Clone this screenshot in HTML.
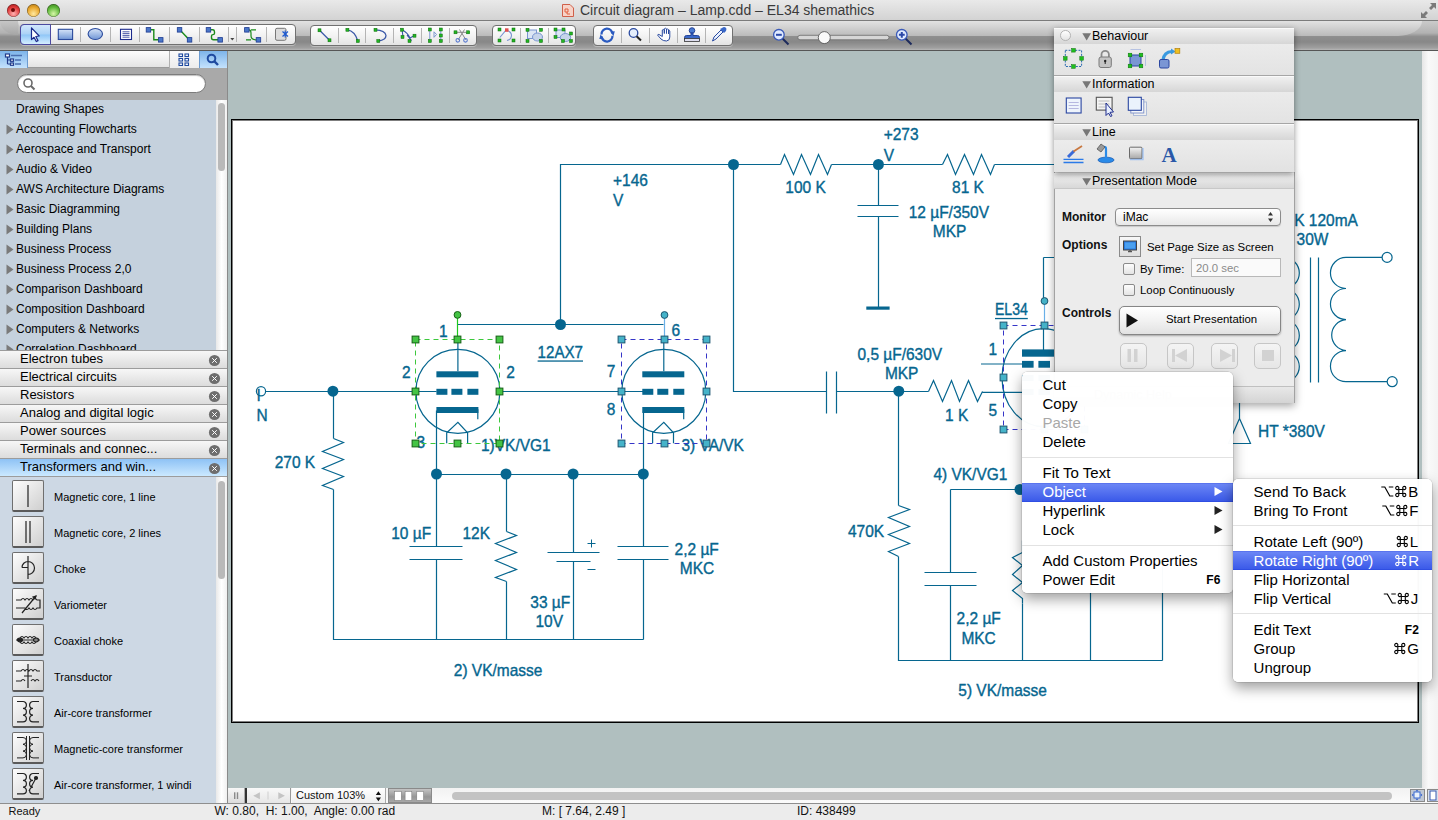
<!DOCTYPE html>
<html><head><meta charset="utf-8">
<style>
*{box-sizing:border-box}
html,body{margin:0;padding:0}
body{width:1438px;height:820px;overflow:hidden;position:relative;font-family:"Liberation Sans",sans-serif;background:#b0bfbf;color:#000}
.a{position:absolute}
#title{left:0;top:0;width:1438px;height:21px;background:linear-gradient(#ebebeb,#d2d2d2);border-bottom:1px solid #6f6f6f}
#tool{left:0;top:21px;width:1438px;height:30px;background:linear-gradient(#c6c6c6 0,#a2a2a2 45%,#8e8e8e 60%,#9a9a9a 85%,#b8b8b8 96%,#555 97%,#555 100%)}
#toolhl{left:18px;top:21px;width:1402px;height:14px;background:linear-gradient(#e2e2e2,#c9c9c9);border-radius:0 0 22px 22px/0 0 14px 14px}
#side{left:0;top:51px;width:228px;height:752px;background:#c7d2de;border-right:1px solid #8a8a8a}
#canvas{left:228px;top:51px;width:1194px;height:737px;background:#b0bfbf}
#vscroll{left:1422px;top:51px;width:16px;height:737px;background:linear-gradient(90deg,#e6e6e6,#f9f9f9 40%,#f3f3f3)}
#hscroll{left:228px;top:788px;width:1210px;height:15px;background:linear-gradient(#f0f0f0,#fafafa)}
#status{left:0;top:803px;width:1438px;height:17px;background:#ececec;border-top:1px solid #9a9a9a;font-size:12px}
#page{left:231px;top:119px;width:1188px;height:604px;background:#fff;border:1px solid #000;box-shadow:inset 0 0 0 1px rgba(0,0,0,.5)}
</style></head><body>
<div class="a" style="left:0;top:0;width:1438px;height:20px;background:linear-gradient(#e9e9e9,#d3d3d3)"></div>
<div class="a" style="left:0;top:20px;width:1438px;height:1px;background:#7b7b7b"></div>
<div class="a" style="left:6.5px;top:3.5px;width:13px;height:13px;border-radius:50%;background:radial-gradient(circle at 50% 75%,#ffb3b3 0,#e03a3a 55%,#8a1010 100%);box-shadow:0 0.5px 0.5px rgba(255,255,255,.7),inset 0 0 0 0.6px rgba(0,0,0,.45)"></div>
<div class="a" style="left:26.5px;top:3.5px;width:13px;height:13px;border-radius:50%;background:radial-gradient(circle at 50% 75%,#ffe9a0 0,#e8a52a 55%,#9a6510 100%);box-shadow:0 0.5px 0.5px rgba(255,255,255,.7),inset 0 0 0 0.6px rgba(0,0,0,.45)"></div>
<div class="a" style="left:46.5px;top:3.5px;width:13px;height:13px;border-radius:50%;background:radial-gradient(circle at 50% 75%,#d7f7a8 0,#5fb83a 55%,#2f6f12 100%);box-shadow:0 0.5px 0.5px rgba(255,255,255,.7),inset 0 0 0 0.6px rgba(0,0,0,.45)"></div>
<div class="a" style="left:11px;top:8px;width:4px;height:4px;border-radius:50%;background:#6d0a0a"></div>
<svg class="a" style="left:562px;top:4px" width="12" height="13"><path d="M0.5,0.5 H8 L11.5,4 V12.5 H0.5 Z" fill="#f7d3c8" stroke="#d0604a"/><path d="M3,5 H6 V8 H3 Z M5,8 V10 H8" fill="none" stroke="#e06040" stroke-width="1"/></svg>
<div class="a" style="left:580px;top:2px;font-size:14px;line-height:17px;color:#3a3a3a;white-space:nowrap">Circuit diagram – Lamp.cdd – EL34 shemathics</div>
<svg class="a" style="left:1420px;top:2px" width="17" height="17"><g fill="#7a7a7a"><path d="M16,1 H10 L12,3 L9,6 L11,8 L14,5 L16,7 Z"/><path d="M1,16 H7 L5,14 L8,11 L6,9 L3,12 L1,10 Z"/></g></svg>
<div class="a" style="left:0;top:21px;width:1438px;height:30px;background:linear-gradient(#cbcbcb 0,#b2b2b2 40%,#8e8e8e 52%,#888 70%,#a0a0a0 90%,#b4b4b4 96%,#565656 97%)"></div>
<div class="a" style="left:18px;top:21px;width:1404px;height:15px;background:linear-gradient(#e2e2e2,#bababa);border-radius:0 0 24px 24px/0 0 15px 15px"></div>
<div class="a" style="left:0;top:21px;width:18px;height:14px;background:linear-gradient(#c6c6c6,#a6a6a6);border-radius:0 0 0 18px/0 0 0 14px"></div>
<div class="a" style="left:20px;top:24px;width:276px;height:20.5px;border-radius:4px;background:linear-gradient(#ffffff,#f3f3f3 50%,#e4e4e4);border:1px solid #707070;box-shadow:0 1px 0 rgba(255,255,255,.35)"></div>
<div class="a" style="left:20px;top:24px;width:31px;height:20.5px;border-radius:4px 0 0 4px;background:linear-gradient(#d2e7fd,#abd2f6 48%,#8fc6f7 52%,#d5eeff);border:1px solid #4c4aa0"></div>
<div class="a" style="left:80px;top:27px;width:1px;height:15px;background:#b4b4b4"></div>
<div class="a" style="left:110px;top:27px;width:1px;height:15px;background:#b4b4b4"></div>
<div class="a" style="left:139px;top:27px;width:1px;height:15px;background:#b4b4b4"></div>
<div class="a" style="left:169px;top:27px;width:1px;height:15px;background:#b4b4b4"></div>
<div class="a" style="left:199px;top:27px;width:1px;height:15px;background:#b4b4b4"></div>
<div class="a" style="left:228px;top:27px;width:1px;height:15px;background:#b4b4b4"></div>
<div class="a" style="left:236px;top:27px;width:1px;height:15px;background:#b4b4b4"></div>
<div class="a" style="left:266px;top:27px;width:1px;height:15px;background:#b4b4b4"></div>
<div class="a" style="left:309.5px;top:25px;width:167.5px;height:20.5px;border-radius:4px;background:linear-gradient(#ffffff,#f3f3f3 50%,#e4e4e4);border:1px solid #707070;box-shadow:0 1px 0 rgba(255,255,255,.35)"></div>
<div class="a" style="left:338px;top:28px;width:1px;height:15px;background:#b4b4b4"></div>
<div class="a" style="left:365px;top:28px;width:1px;height:15px;background:#b4b4b4"></div>
<div class="a" style="left:393px;top:28px;width:1px;height:15px;background:#b4b4b4"></div>
<div class="a" style="left:421px;top:28px;width:1px;height:15px;background:#b4b4b4"></div>
<div class="a" style="left:449px;top:28px;width:1px;height:15px;background:#b4b4b4"></div>
<div class="a" style="left:492px;top:25px;width:84px;height:20.5px;border-radius:4px;background:linear-gradient(#ffffff,#f3f3f3 50%,#e4e4e4);border:1px solid #707070;box-shadow:0 1px 0 rgba(255,255,255,.35)"></div>
<div class="a" style="left:520px;top:28px;width:1px;height:15px;background:#b4b4b4"></div>
<div class="a" style="left:548px;top:28px;width:1px;height:15px;background:#b4b4b4"></div>
<div class="a" style="left:593px;top:25px;width:140px;height:20.5px;border-radius:4px;background:linear-gradient(#ffffff,#f3f3f3 50%,#e4e4e4);border:1px solid #707070;box-shadow:0 1px 0 rgba(255,255,255,.35)"></div>
<div class="a" style="left:621px;top:28px;width:1px;height:15px;background:#b4b4b4"></div>
<div class="a" style="left:649px;top:28px;width:1px;height:15px;background:#b4b4b4"></div>
<div class="a" style="left:677px;top:28px;width:1px;height:15px;background:#b4b4b4"></div>
<div class="a" style="left:705px;top:28px;width:1px;height:15px;background:#b4b4b4"></div>
<svg class="a" style="left:0;top:0" width="1438" height="51"><path d="M31.5,27.8 V39.6 L34,37.3 L36.3,41.5 L38,40.6 L35.8,36.5 L39.2,36 Z" fill="#fff" stroke="#1c2a8c" stroke-width="1.2" stroke-linejoin="round"/><defs><linearGradient id="bl" x1="0" y1="0" x2="0" y2="1"><stop offset="0" stop-color="#d6e4f8"/><stop offset="1" stop-color="#7096d6"/></linearGradient></defs><rect x="58.3" y="29.3" width="14.3" height="10.2" fill="url(#bl)" stroke="#2a4a9c" stroke-width="1.1"/><ellipse cx="95.3" cy="34" rx="7.2" ry="5.5" fill="url(#bl)" stroke="#2a4a9c" stroke-width="1.1"/><rect x="120.5" y="29.3" width="11" height="10.2" fill="#fff" stroke="#1c2a8c" stroke-width="1.1"/><path d="M122.5,31.8 H129.5 M122.5,33.6 H129.5 M122.5,35.4 H129.5 M122.5,37.2 H129.5" stroke="#3a4aa0" stroke-width="0.9"/><path d="M151,29.8 H153.8 V39.8 H158.5" fill="none" stroke="#1a8a1a" stroke-width="1.4"/><rect x="146.2" y="27.6" width="4.5" height="4.5" fill="#4a76c8" stroke="#1c3a90" stroke-width="0.8"/><rect x="158.5" y="37.6" width="4.5" height="4.5" fill="#4a76c8" stroke="#1c3a90" stroke-width="0.8"/><path d="M180,30 L189,39.5" fill="none" stroke="#1a8a1a" stroke-width="1.4"/><rect x="177.3" y="27.6" width="4.5" height="4.5" fill="#4a76c8" stroke="#1c3a90" stroke-width="0.8"/><rect x="187.3" y="37.6" width="4.5" height="4.5" fill="#4a76c8" stroke="#1c3a90" stroke-width="0.8"/><path d="M210.5,29.8 H213 Q214.5,30 214.5,32 V33.3 Q214.5,34.6 213,34.6 Q211.5,34.6 211.5,36 V37.8 Q211.5,39.8 213.5,39.8 H218" fill="none" stroke="#1a8a1a" stroke-width="1.4"/><rect x="206.2" y="27.6" width="4.5" height="4.5" fill="#4a76c8" stroke="#1c3a90" stroke-width="0.8"/><rect x="217.9" y="37.6" width="4.5" height="4.5" fill="#4a76c8" stroke="#1c3a90" stroke-width="0.8"/><path d="M230.3,38 H234.3 L232.3,40.6 Z" fill="#444"/><path d="M249,29.8 Q251,29.8 251,33 V36 Q251,39.8 256.5,39.8 M251,29.8 H256 M246,39.8 H251" fill="none" stroke="#1a8a1a" stroke-width="1.2"/><rect x="244.6" y="27.6" width="4.5" height="4.5" fill="#4a76c8" stroke="#1c3a90" stroke-width="0.8"/><rect x="256.2" y="37.6" width="4.5" height="4.5" fill="#4a76c8" stroke="#1c3a90" stroke-width="0.8"/><rect x="275.5" y="28.3" width="10.5" height="12" rx="1.5" fill="#dcdcdc" stroke="#6a6a6a" stroke-width="0.9"/><path d="M282.5,31.5 L288,36.5 M288,31.5 L282.5,36.5 M285.2,30.5 V37.5" stroke="#1e5ad0" stroke-width="1.2"/><path d="M319.5,30.3 L329.5,40.3" stroke="#3a58a8" stroke-width="1.3"/><rect x="318.0" y="28.8" width="3" height="3" fill="#22b422" stroke="#0a6a0a" stroke-width="0.5"/><rect x="328.0" y="38.8" width="3" height="3" fill="#22b422" stroke="#0a6a0a" stroke-width="0.5"/><path d="M347.4,29.8 Q355,31 357.8,41" fill="none" stroke="#3a58a8" stroke-width="1.3"/><rect x="345.9" y="28.3" width="3" height="3" fill="#22b422" stroke="#0a6a0a" stroke-width="0.5"/><rect x="356.3" y="39.5" width="3" height="3" fill="#22b422" stroke="#0a6a0a" stroke-width="0.5"/><path d="M375.5,29.8 Q385,30 386,35.5 Q386,40 378.3,41" fill="none" stroke="#3a58a8" stroke-width="1.3"/><rect x="374.0" y="28.3" width="3" height="3" fill="#22b422" stroke="#0a6a0a" stroke-width="0.5"/><rect x="376.8" y="39.5" width="3" height="3" fill="#22b422" stroke="#0a6a0a" stroke-width="0.5"/><path d="M402,29.7 L403,36.5 M402,29.7 Q408,33 410,38 L414.5,35.5 M407,35 Q410,38 411.3,41" fill="none" stroke="#3a58a8" stroke-width="1.1"/><rect x="400.5" y="28.2" width="3" height="3" fill="#22b422" stroke="#0a6a0a" stroke-width="0.5"/><rect x="401.0" y="35.5" width="3" height="3" fill="#22b422" stroke="#0a6a0a" stroke-width="0.5"/><rect x="408.0" y="39.5" width="3" height="3" fill="#22b422" stroke="#0a6a0a" stroke-width="0.5"/><rect x="413.0" y="34.2" width="3" height="3" fill="#22b422" stroke="#0a6a0a" stroke-width="0.5"/><path d="M429.8,30 V41 M440.8,30 V41 M434,31.8 L436.5,34.5 L434,37.3 Z" fill="none" stroke="#7a96d0" stroke-width="1"/><rect x="428.3" y="28.0" width="3" height="3" fill="#22b422" stroke="#0a6a0a" stroke-width="0.5"/><rect x="428.3" y="39.5" width="3" height="3" fill="#22b422" stroke="#0a6a0a" stroke-width="0.5"/><rect x="439.3" y="28.0" width="3" height="3" fill="#22b422" stroke="#0a6a0a" stroke-width="0.5"/><rect x="439.3" y="34.0" width="3" height="3" fill="#22b422" stroke="#0a6a0a" stroke-width="0.5"/><rect x="439.3" y="39.5" width="3" height="3" fill="#22b422" stroke="#0a6a0a" stroke-width="0.5"/><path d="M455.5,32.3 H468.2 M458,40 L464.5,29.5 M466,40 L459.5,29.5" fill="none" stroke="#8a8a8a" stroke-width="1"/><circle cx="457.8" cy="40.3" r="1.8" fill="none" stroke="#5a7ad0" stroke-width="1.1"/><circle cx="465.5" cy="40.3" r="1.8" fill="none" stroke="#5a7ad0" stroke-width="1.1"/><rect x="454.0" y="30.799999999999997" width="3" height="3" fill="#22b422" stroke="#0a6a0a" stroke-width="0.5"/><rect x="466.7" y="30.799999999999997" width="3" height="3" fill="#22b422" stroke="#0a6a0a" stroke-width="0.5"/><path d="M499.8,37.5 L505.8,30.3 Q511,31 511.5,35 Q511.5,39.5 507,40.5" fill="none" stroke="#7a96d0" stroke-width="1.1"/><rect x="498.0" y="28.0" width="3" height="3" fill="#22b422" stroke="#0a6a0a" stroke-width="0.5"/><rect x="498.0" y="39.0" width="3" height="3" fill="#22b422" stroke="#0a6a0a" stroke-width="0.5"/><rect x="512.0" y="28.0" width="3" height="3" fill="#22b422" stroke="#0a6a0a" stroke-width="0.5"/><rect x="512.0" y="39.0" width="3" height="3" fill="#22b422" stroke="#0a6a0a" stroke-width="0.5"/><rect x="505" y="28.3" width="3.5" height="3.5" fill="#e05050"/><rect x="527.5" y="30" width="9" height="8.5" fill="#dce6f4" stroke="#7a96d0" stroke-width="1"/><ellipse cx="537.5" cy="37" rx="5" ry="4" fill="#c6d4ea" stroke="#7a96d0" stroke-width="1"/><rect x="526.0" y="28.3" width="3" height="3" fill="#22b422" stroke="#0a6a0a" stroke-width="0.5"/><rect x="526.0" y="39.5" width="3" height="3" fill="#22b422" stroke="#0a6a0a" stroke-width="0.5"/><rect x="539.5" y="28.3" width="3" height="3" fill="#22b422" stroke="#0a6a0a" stroke-width="0.5"/><rect x="539.5" y="39.5" width="3" height="3" fill="#22b422" stroke="#0a6a0a" stroke-width="0.5"/><rect x="556" y="30" width="9" height="7.5" fill="#dce6f4" stroke="#7a96d0" stroke-width="1"/><ellipse cx="565.5" cy="37.5" rx="5.2" ry="4" fill="#c6d4ea" stroke="#7a96d0" stroke-width="1"/><rect x="554.0" y="28.0" width="3" height="3" fill="#22b422" stroke="#0a6a0a" stroke-width="0.5"/><rect x="562.0" y="28.0" width="3" height="3" fill="#22b422" stroke="#0a6a0a" stroke-width="0.5"/><rect x="554.0" y="35.5" width="3" height="3" fill="#22b422" stroke="#0a6a0a" stroke-width="0.5"/><rect x="569.5" y="32.0" width="3" height="3" fill="#22b422" stroke="#0a6a0a" stroke-width="0.5"/><rect x="569.5" y="39.5" width="3" height="3" fill="#22b422" stroke="#0a6a0a" stroke-width="0.5"/><rect x="561.5" y="39.5" width="3" height="3" fill="#22b422" stroke="#0a6a0a" stroke-width="0.5"/><path d="M601.5,34.5 A5.5,5.5 0 0 1 612.5,33.8 M612.5,35.8 A5.5,5.5 0 0 1 601.5,36.3" fill="none" stroke="#2a5ac0" stroke-width="2.2"/><path d="M610,31.5 L614.8,31.3 L613.5,36 Z M604,38.8 L599.3,39 L600.5,34.5 Z" fill="#2a5ac0"/><circle cx="633.5" cy="33" r="4.3" fill="#e4eefc" stroke="#2a4aa0" stroke-width="1.3"/><path d="M636.6,36.2 L641,40.5" stroke="#222" stroke-width="2"/><path d="M657.5,35 L661,39 Q663,41 666.5,41 Q670,40.5 669.8,37 V31 Q669.5,29.8 668.5,30.5 V34 V29.5 Q667.5,28.5 666.5,29.5 V33.5 V28.8 Q665.3,27.6 664.3,28.8 V33.5 V30 Q663.2,29 662.3,30 V36.5 L659,34.5 Q658,34 657.5,35 Z" fill="#fff" stroke="#2a4aa0" stroke-width="1"/><circle cx="692" cy="30.5" r="2.8" fill="#4a7ad0" stroke="#1c3a90" stroke-width="0.9"/><path d="M691,33 H693 V35.5 H697.5 Q699.5,35.5 699.5,37.5 V40 H684.5 V37.5 Q684.5,35.5 686.5,35.5 H691 Z" fill="#3a68c8" stroke="#1c3a90" stroke-width="0.9"/><rect x="684.5" y="38.5" width="15" height="3" fill="#dde" stroke="#333" stroke-width="0.8"/><path d="M712.5,41 L714,37 L721,30 L723,32 L716,39 Z" fill="#e8f0ff" stroke="#2a4aa0" stroke-width="1"/><path d="M720,29 L724,33 L726,31 Q727,28 725.5,27.5 Q724,26.5 722,28 Z" fill="#3a68c8"/><path d="M782.5,38.5 L788.5,44.5" stroke="#1c2a5c" stroke-width="2"/><circle cx="778.9" cy="34.8" r="5.3" fill="#e0eaff" stroke="#3a5ab8" stroke-width="1.3"/><path d="M776,34.8 H781.8" stroke="#2a48a8" stroke-width="2"/><rect x="797.8" y="35.3" width="91.2" height="4.5" rx="2.2" fill="#d6d6d6" stroke="#6a6a6a" stroke-width="0.8"/><circle cx="824.3" cy="37.6" r="6" fill="#fafafa" stroke="#5a5a5a" stroke-width="0.9"/><path d="M905.5,38.5 L911.5,44.5" stroke="#1c2a5c" stroke-width="2"/><circle cx="901.8" cy="34.8" r="5.3" fill="#e0eaff" stroke="#3a5ab8" stroke-width="1.3"/><path d="M898.9,34.8 H904.7 M901.8,31.9 V37.7" stroke="#2a48a8" stroke-width="2"/></svg>
<div class="a" style="left:0;top:51px;width:228px;height:752px;overflow:hidden">
<div class="a" style="left:0;top:0;width:227px;height:17px;background:linear-gradient(#fdfdfd,#e4e4e4);border-bottom:1px solid #9a9a9a"></div>
<div class="a" style="left:0;top:0;width:28px;height:17px;background:linear-gradient(#7db4ea,#c4e2fd);border-right:1px solid #6c9bd0"></div>
<svg class="a" style="left:4px;top:2px" width="20" height="13"><g fill="none" stroke="#233c8c" stroke-width="1.2"><rect x="1.5" y="1" width="4" height="3" fill="#fff"/><path d="M3.5,4 V11 M3.5,7 H6 M3.5,11 H6"/><rect x="6.5" y="6" width="3" height="2.3" fill="#fff"/><rect x="6.5" y="10" width="3" height="2.3" fill="#fff"/></g><g stroke="#4a6fb0" stroke-width="1.6"><path d="M7,2.5 H18 M11,7 H17 M11,11 H17"/></g></svg>
<div class="a" style="left:169px;top:0;width:31px;height:17px;background:linear-gradient(#fbfbfb,#ececec);border-left:1px solid #b0b0b0"></div>
<svg class="a" style="left:178px;top:2px" width="12" height="13"><g fill="#fff" stroke="#1f4aa0" stroke-width="1.1"><rect x="1" y="1" width="3.5" height="2.5"/><rect x="7" y="1" width="3.5" height="2.5"/><rect x="1" y="5.5" width="3.5" height="2.5"/><rect x="7" y="5.5" width="3.5" height="2.5"/><rect x="1" y="10" width="3.5" height="2.5"/><rect x="7" y="10" width="3.5" height="2.5"/></g></svg>
<div class="a" style="left:199px;top:0;width:28px;height:17px;background:linear-gradient(#7db4ea,#c4e2fd);border-left:1px solid #6c9bd0"></div>
<svg class="a" style="left:206px;top:2px" width="14" height="13"><circle cx="5.5" cy="5.5" r="3.8" fill="none" stroke="#1f4aa0" stroke-width="2"/><path d="M8.2,8.2 L12,12" stroke="#1f4aa0" stroke-width="2.4"/></svg>
<div class="a" style="left:0;top:17px;width:227px;height:32px;background:#a9a9a9"></div>
<div class="a" style="left:17px;top:23px;width:189px;height:19px;background:#fff;border:1px solid #7c7c7c;border-radius:10px;box-shadow:inset 0 1px 1px rgba(0,0,0,.25)"></div>
<svg class="a" style="left:22px;top:26px" width="14" height="14"><circle cx="6" cy="6" r="4" fill="none" stroke="#6a6a6a" stroke-width="1.6"/><path d="M9,9 L12.5,12.5" stroke="#6a6a6a" stroke-width="2"/></svg>
<div class="a" style="left:0;top:49px;width:216px;height:250px;background:#c5d1dd"></div>
<div class="a" style="left:216px;top:49px;width:11px;height:250px;background:linear-gradient(90deg,#e8e8e8,#fff 50%,#f0f0f0)"></div>
<div class="a" style="left:218px;top:52px;width:7px;height:68px;background:#b9b9b9;border-radius:4px"></div>
<div class="a" style="left:16px;top:50px;font-size:12px;line-height:16px;color:#000;white-space:nowrap">Drawing Shapes</div>
<div class="a" style="left:16px;top:70px;font-size:12px;line-height:16px;color:#000;white-space:nowrap">Accounting Flowcharts</div>
<svg class="a" style="left:6px;top:73px" width="9" height="11"><path d="M0.5,0.5 L7.5,5.5 L0.5,10.5 Z" fill="#7a7a7a"/></svg>
<div class="a" style="left:16px;top:90px;font-size:12px;line-height:16px;color:#000;white-space:nowrap">Aerospace and Transport</div>
<svg class="a" style="left:6px;top:93px" width="9" height="11"><path d="M0.5,0.5 L7.5,5.5 L0.5,10.5 Z" fill="#7a7a7a"/></svg>
<div class="a" style="left:16px;top:110px;font-size:12px;line-height:16px;color:#000;white-space:nowrap">Audio &amp; Video</div>
<svg class="a" style="left:6px;top:113px" width="9" height="11"><path d="M0.5,0.5 L7.5,5.5 L0.5,10.5 Z" fill="#7a7a7a"/></svg>
<div class="a" style="left:16px;top:130px;font-size:12px;line-height:16px;color:#000;white-space:nowrap">AWS Architecture Diagrams</div>
<svg class="a" style="left:6px;top:133px" width="9" height="11"><path d="M0.5,0.5 L7.5,5.5 L0.5,10.5 Z" fill="#7a7a7a"/></svg>
<div class="a" style="left:16px;top:150px;font-size:12px;line-height:16px;color:#000;white-space:nowrap">Basic Diagramming</div>
<svg class="a" style="left:6px;top:153px" width="9" height="11"><path d="M0.5,0.5 L7.5,5.5 L0.5,10.5 Z" fill="#7a7a7a"/></svg>
<div class="a" style="left:16px;top:170px;font-size:12px;line-height:16px;color:#000;white-space:nowrap">Building Plans</div>
<svg class="a" style="left:6px;top:173px" width="9" height="11"><path d="M0.5,0.5 L7.5,5.5 L0.5,10.5 Z" fill="#7a7a7a"/></svg>
<div class="a" style="left:16px;top:190px;font-size:12px;line-height:16px;color:#000;white-space:nowrap">Business Process</div>
<svg class="a" style="left:6px;top:193px" width="9" height="11"><path d="M0.5,0.5 L7.5,5.5 L0.5,10.5 Z" fill="#7a7a7a"/></svg>
<div class="a" style="left:16px;top:210px;font-size:12px;line-height:16px;color:#000;white-space:nowrap">Business Process 2,0</div>
<svg class="a" style="left:6px;top:213px" width="9" height="11"><path d="M0.5,0.5 L7.5,5.5 L0.5,10.5 Z" fill="#7a7a7a"/></svg>
<div class="a" style="left:16px;top:230px;font-size:12px;line-height:16px;color:#000;white-space:nowrap">Comparison Dashboard</div>
<svg class="a" style="left:6px;top:233px" width="9" height="11"><path d="M0.5,0.5 L7.5,5.5 L0.5,10.5 Z" fill="#7a7a7a"/></svg>
<div class="a" style="left:16px;top:250px;font-size:12px;line-height:16px;color:#000;white-space:nowrap">Composition Dashboard</div>
<svg class="a" style="left:6px;top:253px" width="9" height="11"><path d="M0.5,0.5 L7.5,5.5 L0.5,10.5 Z" fill="#7a7a7a"/></svg>
<div class="a" style="left:16px;top:270px;font-size:12px;line-height:16px;color:#000;white-space:nowrap">Computers &amp; Networks</div>
<svg class="a" style="left:6px;top:273px" width="9" height="11"><path d="M0.5,0.5 L7.5,5.5 L0.5,10.5 Z" fill="#7a7a7a"/></svg>
<div class="a" style="left:16px;top:290px;font-size:12px;line-height:16px;color:#000;white-space:nowrap">Correlation Dashboard</div>
<svg class="a" style="left:6px;top:293px" width="9" height="11"><path d="M0.5,0.5 L7.5,5.5 L0.5,10.5 Z" fill="#7a7a7a"/></svg>
<div class="a" style="left:0;top:299px;width:227px;height:19px;background:linear-gradient(#f7f7f7,#dcdcdc);border-top:1px solid #9c9c9c;border-bottom:1px solid #9c9c9c"></div>
<div class="a" style="left:20px;top:300px;font-size:13px;line-height:16px;color:#000;white-space:nowrap">Electron tubes</div>
<svg class="a" style="left:208px;top:303px" width="13" height="13"><circle cx="6.5" cy="6.5" r="5.6" fill="#6e6e6e"/><path d="M4.2,4.2 L8.8,8.8 M8.8,4.2 L4.2,8.8" stroke="#fff" stroke-width="1"/></svg>
<div class="a" style="left:0;top:317px;width:227px;height:19px;background:linear-gradient(#f7f7f7,#dcdcdc);border-top:1px solid #9c9c9c;border-bottom:1px solid #9c9c9c"></div>
<div class="a" style="left:20px;top:318px;font-size:13px;line-height:16px;color:#000;white-space:nowrap">Electrical circuits</div>
<svg class="a" style="left:208px;top:321px" width="13" height="13"><circle cx="6.5" cy="6.5" r="5.6" fill="#6e6e6e"/><path d="M4.2,4.2 L8.8,8.8 M8.8,4.2 L4.2,8.8" stroke="#fff" stroke-width="1"/></svg>
<div class="a" style="left:0;top:335px;width:227px;height:19px;background:linear-gradient(#f7f7f7,#dcdcdc);border-top:1px solid #9c9c9c;border-bottom:1px solid #9c9c9c"></div>
<div class="a" style="left:20px;top:336px;font-size:13px;line-height:16px;color:#000;white-space:nowrap">Resistors</div>
<svg class="a" style="left:208px;top:339px" width="13" height="13"><circle cx="6.5" cy="6.5" r="5.6" fill="#6e6e6e"/><path d="M4.2,4.2 L8.8,8.8 M8.8,4.2 L4.2,8.8" stroke="#fff" stroke-width="1"/></svg>
<div class="a" style="left:0;top:353px;width:227px;height:19px;background:linear-gradient(#f7f7f7,#dcdcdc);border-top:1px solid #9c9c9c;border-bottom:1px solid #9c9c9c"></div>
<div class="a" style="left:20px;top:354px;font-size:13px;line-height:16px;color:#000;white-space:nowrap">Analog and digital logic</div>
<svg class="a" style="left:208px;top:357px" width="13" height="13"><circle cx="6.5" cy="6.5" r="5.6" fill="#6e6e6e"/><path d="M4.2,4.2 L8.8,8.8 M8.8,4.2 L4.2,8.8" stroke="#fff" stroke-width="1"/></svg>
<div class="a" style="left:0;top:371px;width:227px;height:19px;background:linear-gradient(#f7f7f7,#dcdcdc);border-top:1px solid #9c9c9c;border-bottom:1px solid #9c9c9c"></div>
<div class="a" style="left:20px;top:372px;font-size:13px;line-height:16px;color:#000;white-space:nowrap">Power sources</div>
<svg class="a" style="left:208px;top:375px" width="13" height="13"><circle cx="6.5" cy="6.5" r="5.6" fill="#6e6e6e"/><path d="M4.2,4.2 L8.8,8.8 M8.8,4.2 L4.2,8.8" stroke="#fff" stroke-width="1"/></svg>
<div class="a" style="left:0;top:389px;width:227px;height:19px;background:linear-gradient(#f7f7f7,#dcdcdc);border-top:1px solid #9c9c9c;border-bottom:1px solid #9c9c9c"></div>
<div class="a" style="left:20px;top:390px;font-size:13px;line-height:16px;color:#000;white-space:nowrap">Terminals and connec...</div>
<svg class="a" style="left:208px;top:393px" width="13" height="13"><circle cx="6.5" cy="6.5" r="5.6" fill="#6e6e6e"/><path d="M4.2,4.2 L8.8,8.8 M8.8,4.2 L4.2,8.8" stroke="#fff" stroke-width="1"/></svg>
<div class="a" style="left:0;top:407px;width:227px;height:19px;background:linear-gradient(#8ec2f5,#cbe9ff);border-top:1px solid #9c9c9c;border-bottom:1px solid #9c9c9c"></div>
<div class="a" style="left:20px;top:408px;font-size:13px;line-height:16px;color:#000;white-space:nowrap">Transformers and win...</div>
<svg class="a" style="left:208px;top:411px" width="13" height="13"><circle cx="6.5" cy="6.5" r="5.6" fill="#6e6e6e"/><path d="M4.2,4.2 L8.8,8.8 M8.8,4.2 L4.2,8.8" stroke="#fff" stroke-width="1"/></svg>
<div class="a" style="left:0;top:426px;width:216px;height:326px;background:#cdd8e4"></div>
<div class="a" style="left:216px;top:426px;width:11px;height:326px;background:linear-gradient(90deg,#e8e8e8,#fff 50%,#f0f0f0)"></div>
<div class="a" style="left:218px;top:430px;width:7px;height:98px;background:#b9b9b9;border-radius:4px"></div>
<div class="a" style="left:12px;top:429px;width:32px;height:32px;background:linear-gradient(135deg,#fdfdfd,#e6e6e6 50%,#cfcfcf);border:1px solid #6f6f6f;border-bottom:2px solid #5a5a5a;border-radius:2px"></div>
<svg class="a" style="left:12px;top:429px" width="32" height="32"><g fill="none" stroke="#222" stroke-width="1.2"><path d="M16,5 V27"/></g></svg>
<div class="a" style="left:54px;top:440px;font-size:11px;line-height:13px;color:#000;white-space:nowrap">Magnetic core, 1 line</div>
<div class="a" style="left:12px;top:465px;width:32px;height:32px;background:linear-gradient(135deg,#fdfdfd,#e6e6e6 50%,#cfcfcf);border:1px solid #6f6f6f;border-bottom:2px solid #5a5a5a;border-radius:2px"></div>
<svg class="a" style="left:12px;top:465px" width="32" height="32"><g fill="none" stroke="#222" stroke-width="1.2"><path d="M14,5 V27 M18,5 V27"/></g></svg>
<div class="a" style="left:54px;top:476px;font-size:11px;line-height:13px;color:#000;white-space:nowrap">Magnetic core, 2 lines</div>
<div class="a" style="left:12px;top:501px;width:32px;height:32px;background:linear-gradient(135deg,#fdfdfd,#e6e6e6 50%,#cfcfcf);border:1px solid #6f6f6f;border-bottom:2px solid #5a5a5a;border-radius:2px"></div>
<svg class="a" style="left:12px;top:501px" width="32" height="32"><g fill="none" stroke="#222" stroke-width="1.2"><path d="M16,4 V27 M10,15.5 H16 M10,15.5 A6,6 0 0 1 16,9.5 A6.5,6.5 0 0 1 16,22.5"/></g></svg>
<div class="a" style="left:54px;top:512px;font-size:11px;line-height:13px;color:#000;white-space:nowrap">Choke</div>
<div class="a" style="left:12px;top:537px;width:32px;height:32px;background:linear-gradient(135deg,#fdfdfd,#e6e6e6 50%,#cfcfcf);border:1px solid #6f6f6f;border-bottom:2px solid #5a5a5a;border-radius:2px"></div>
<svg class="a" style="left:12px;top:537px" width="32" height="32"><g fill="none" stroke="#222" stroke-width="1.2"><path d="M4,12 H9 Q11,9 13,12 Q15,9 17,12 Q19,9 21,12 Q23,9 25,12 H28 V20 H25 Q23,23 21,20 Q19,23 17,20 Q15,23 13,20 H4 M10,25 L24,8"/><path d="M24,8 L21,9 L23,11 Z" fill="#222"/></g></svg>
<div class="a" style="left:54px;top:548px;font-size:11px;line-height:13px;color:#000;white-space:nowrap">Variometer</div>
<div class="a" style="left:12px;top:573px;width:32px;height:32px;background:linear-gradient(135deg,#fdfdfd,#e6e6e6 50%,#cfcfcf);border:1px solid #6f6f6f;border-bottom:2px solid #5a5a5a;border-radius:2px"></div>
<svg class="a" style="left:12px;top:573px" width="32" height="32"><g fill="none" stroke="#222" stroke-width="1.2"><path d="M4,16 H28 M8,14 Q10,11 12,14 Q14,11 16,14 Q18,11 20,14 Q22,11 24,14 M8,18 Q10,21 12,18 Q14,21 16,18 Q18,21 20,18 Q22,21 24,18"/><ellipse cx="8" cy="16" rx="2.5" ry="1.8" fill="#222"/><ellipse cx="24" cy="16" rx="2.5" ry="1.8" fill="none"/></g></svg>
<div class="a" style="left:54px;top:584px;font-size:11px;line-height:13px;color:#000;white-space:nowrap">Coaxial choke</div>
<div class="a" style="left:12px;top:609px;width:32px;height:32px;background:linear-gradient(135deg,#fdfdfd,#e6e6e6 50%,#cfcfcf);border:1px solid #6f6f6f;border-bottom:2px solid #5a5a5a;border-radius:2px"></div>
<svg class="a" style="left:12px;top:609px" width="32" height="32"><g fill="none" stroke="#222" stroke-width="1.2"><path d="M4,11 H9 Q11,8 13,11 Q15,8 17,11 Q19,8 21,11 Q23,8 25,11 H28 M4,21 H9 Q11,18 13,21 M19,21 Q21,18 23,21 Q25,18 27,21 M16,4 V28 M12,16 H20"/></g></svg>
<div class="a" style="left:54px;top:620px;font-size:11px;line-height:13px;color:#000;white-space:nowrap">Transductor</div>
<div class="a" style="left:12px;top:645px;width:32px;height:32px;background:linear-gradient(135deg,#fdfdfd,#e6e6e6 50%,#cfcfcf);border:1px solid #6f6f6f;border-bottom:2px solid #5a5a5a;border-radius:2px"></div>
<svg class="a" style="left:12px;top:645px" width="32" height="32"><g fill="none" stroke="#222" stroke-width="1.2"><path d="M5,5.5 H11 A3.4,3.4 0 0 1 11,12.3 A3.4,3.4 0 0 1 11,19.1 A3.4,3.4 0 0 1 11,25.9 H5 M27,5.5 H21 A3.4,3.4 0 0 0 21,12.3 A3.4,3.4 0 0 0 21,19.1 A3.4,3.4 0 0 0 21,25.9 H27"/></g></svg>
<div class="a" style="left:54px;top:656px;font-size:11px;line-height:13px;color:#000;white-space:nowrap">Air-core transformer</div>
<div class="a" style="left:12px;top:681px;width:32px;height:32px;background:linear-gradient(135deg,#fdfdfd,#e6e6e6 50%,#cfcfcf);border:1px solid #6f6f6f;border-bottom:2px solid #5a5a5a;border-radius:2px"></div>
<svg class="a" style="left:12px;top:681px" width="32" height="32"><g fill="none" stroke="#222" stroke-width="1.2"><path d="M5,5.5 H11 A3.4,3.4 0 0 1 11,12.3 A3.4,3.4 0 0 1 11,19.1 A3.4,3.4 0 0 1 11,25.9 H5 M27,5.5 H21 A3.4,3.4 0 0 0 21,12.3 A3.4,3.4 0 0 0 21,19.1 A3.4,3.4 0 0 0 21,25.9 H27 M14.5,4 V28 M17.5,4 V28" stroke-width="1"/></g></svg>
<div class="a" style="left:54px;top:692px;font-size:11px;line-height:13px;color:#000;white-space:nowrap">Magnetic-core transformer</div>
<div class="a" style="left:12px;top:717px;width:32px;height:32px;background:linear-gradient(135deg,#fdfdfd,#e6e6e6 50%,#cfcfcf);border:1px solid #6f6f6f;border-bottom:2px solid #5a5a5a;border-radius:2px"></div>
<svg class="a" style="left:12px;top:717px" width="32" height="32"><g fill="none" stroke="#222" stroke-width="1.2"><path d="M5,5.5 H11 A3.4,3.4 0 0 1 11,12.3 A3.4,3.4 0 0 1 11,19.1 A3.4,3.4 0 0 1 11,25.9 H5 M27,5.5 H21 A3.4,3.4 0 0 0 21,12.3 A3.4,3.4 0 0 0 21,19.1 A3.4,3.4 0 0 0 21,25.9 H27 M17,23 L24,10"/><circle cx="24" cy="10" r="1.5" fill="#222"/></g></svg>
<div class="a" style="left:54px;top:728px;font-size:11px;line-height:13px;color:#000;white-space:nowrap">Air-core transformer, 1 windi</div>
<div class="a" style="left:227px;top:0;width:1px;height:752px;background:#8a8a8a"></div>
</div>
<div id="canvas" class="a"></div>
<div id="page" class="a"></div>
<svg class="a" style="left:0;top:0" width="1438" height="820" viewBox="0 0 1438 820">
<defs><clipPath id="pc"><rect x="233" y="121" width="1184" height="600"/></clipPath></defs>
<g clip-path="url(#pc)">
<g fill="none" stroke="#06668f" stroke-width="1.2">
<path d="M560.5,324.5 V164.5 H780.5 " />
<path d="M780.5,164.5 L784.5,154.5 L793.5,174.5 L801.5,154.5 L810.5,174.5 L818.5,154.5 L827.5,174.5 L831.5,164.5" />
<path d="M831.5,164.5 H942.5" />
<path d="M942.5,164.5 L947.5,154.5 L955.5,174.5 L964.5,154.5 L973.5,174.5 L981.5,154.5 L990.5,174.5 L994.5,164.5" />
<path d="M994.5,164.5 H1060.5" />
<path d="M733.5,164.5 V391.5 H826.5" />
<path d="M826.5,371.5 V413.5 M836.5,371.5 V413.5" />
<path d="M836.5,391.5 H928.5" />
<path d="M928.5,391.5 L933.5,380.5 L942.5,401.5 L951.5,380.5 L959.5,401.5 L968.5,380.5 L977.5,401.5 L982.5,391.5" />
<path d="M878.5,164.5 V205.5 M857.5,205.5 H898.5 M857.5,216.5 H898.5 M878.5,216.5 V308.5" />
<rect x="866.3" y="306.5" width="23.3" height="3.2" fill="#06668f" stroke="none"/>
<path d="M265.5,391.5 H436.5" />
<circle cx="261" cy="391.2" r="4.6" fill="#fff"/>
<path d="M333.5,391.5 V438.5" />
<path d="M333.5,438.5 L343.5,442.5 L322.5,451.5 L343.5,459.5 L322.5,468.5 L343.5,476.5 L322.5,485.5 L333.5,489.5" />
<path d="M333.5,489.5 V639.5 H643.5" />
<path d="M499.5,391.5 H643.5" />
<path d="M457.5,324.5 H663.5" />
<path d="M436.5,410.5 V474.5 H643.5 M643.5,410.5 V474.5" />
<path d="M436.5,474.5 V546.5 M409.5,546.5 H462.5 M409.5,559.5 H462.5 M436.5,559.5 V639.5" />
<path d="M506.5,474.5 V531.5" />
<path d="M506.5,531.5 L516.5,535.5 L495.5,543.5 L516.5,552.5 L495.5,560.5 L516.5,569.5 L495.5,577.5 L506.5,581.5" />
<path d="M506.5,581.5 V639.5" />
<path d="M573.5,474.5 V552.5 M547.5,552.5 H599.5 M556.5,561.5 H590.5 M573.5,561.5 V639.5" />
<path d="M587.5,543.5 H595.5 M591.5,539.5 V547.5 M587.5,569.5 H595.5" stroke-width="1"/>
<path d="M643.5,474.5 V546.5 M617.5,546.5 H668.5 M617.5,559.5 H668.5 M643.5,559.5 V639.5" />
<path d="M1043.5,257.5 H1060.5 M1043.5,257.5 V301.5" />
<path d="M898.5,391.5 V505.5" />
<path d="M898.5,505.5 L909.5,509.5 L888.5,517.5 L909.5,526.5 L888.5,534.5 L909.5,543.5 L888.5,551.5 L898.5,556.5" />
<path d="M898.5,556.5 V660.5 H1162.5" />
<path d="M950.5,489.5 H1022.5 M950.5,489.5 V572.5 M924.5,572.5 H976.5 M924.5,585.5 H976.5 M950.5,585.5 V660.5" />
<path d="M1022.5,603.5 V660.5 M1090.5,560.5 V660.5 M1162.5,560.5 V660.5" />
<path d="M1022.5,540.5 V552.5 L1012.5,557.5 L1022.5,565.5 L1012.5,574.5 L1022.5,582.5 L1012.5,590.5 L1022.5,598.5 V603.5" />
<path d="M1310.5,257.5 V382.5 M1318.5,257.5 V382.5" />
<path d="M1382,257.4 H1346 A15.55,15.55 0 0 0 1346,288.5 A15.55,15.55 0 0 0 1346,319.6 A15.55,15.55 0 0 0 1346,350.6 A15.55,15.55 0 0 0 1346,381.7 H1387" />
<circle cx="1387.1" cy="257.4" r="5" fill="#fff"/>
<circle cx="1392.2" cy="381.7" r="5" fill="#fff"/>
<path d="M1283.7,257.4 A15.6,15.6 0 0 1 1283.7,288.6 A15.6,15.6 0 0 1 1283.7,319.8 A15.6,15.6 0 0 1 1283.7,351 A15.6,15.6 0 0 1 1283.7,382.2" />
<path d="M1239.5,400.5 V418.5 M1239.5,418.5 L1250.5,443.5 H1228.5 Z" />
<circle cx="457.9" cy="391.3" r="42" fill="none"/>
<path d="M457.9,340.3 V371.3"/>
<rect x="436.4" y="371.3" width="42" height="6" fill="#06668f" stroke="none"/>
<rect x="436.4" y="388.8" width="11" height="6" fill="#06668f" stroke="none"/>
<rect x="451.4" y="388.8" width="11" height="6" fill="#06668f" stroke="none"/>
<rect x="467.4" y="388.8" width="11" height="6" fill="#06668f" stroke="none"/>
<rect x="436.4" y="407.0" width="42" height="6" fill="#06668f" stroke="none"/>
<path d="M477.79999999999995,409.3 V419.3"/>
<path d="M446.7,443.3 V432.8 L457.9,422.3 L467.59999999999997,432.8 V443.3"/>
<circle cx="663.8" cy="391.3" r="42" fill="none"/>
<path d="M663.8,340.3 V371.3"/>
<rect x="642.3" y="371.3" width="42" height="6" fill="#06668f" stroke="none"/>
<rect x="642.3" y="388.8" width="11" height="6" fill="#06668f" stroke="none"/>
<rect x="657.3" y="388.8" width="11" height="6" fill="#06668f" stroke="none"/>
<rect x="673.3" y="388.8" width="11" height="6" fill="#06668f" stroke="none"/>
<rect x="642.3" y="407.0" width="42" height="6" fill="#06668f" stroke="none"/>
<path d="M683.6999999999999,409.3 V419.3"/>
<path d="M652.5999999999999,443.3 V432.8 L663.8,422.3 L673.5,432.8 V443.3"/>
<ellipse cx="1043.5" cy="377.7" rx="41.5" ry="49" fill="none"/>
<path d="M1043.5,325.1 V350"/>
<rect x="1022" y="349.4" width="42" height="7.3" fill="#06668f" stroke="none"/>
<rect x="1022" y="360.9" width="11.6" height="6.8" fill="#06668f" stroke="none"/>
<rect x="1038.4" y="360.9" width="11.6" height="6.8" fill="#06668f" stroke="none"/>
<rect x="1054.5" y="360.9" width="11.6" height="6.8" fill="#06668f" stroke="none"/>
<rect x="1022" y="375" width="11.6" height="6" fill="#06668f" stroke="none"/>
<rect x="1038.4" y="375" width="11.6" height="6" fill="#06668f" stroke="none"/>
<rect x="1054.5" y="375" width="11.6" height="6" fill="#06668f" stroke="none"/>
<rect x="1022" y="389" width="11.6" height="6" fill="#06668f" stroke="none"/>
<rect x="1038.4" y="389" width="11.6" height="6" fill="#06668f" stroke="none"/>
<rect x="1054.5" y="389" width="11.6" height="6" fill="#06668f" stroke="none"/>
<path d="M981,364 H1022 M982.1,392.4 H1022"/>
</g>
<g fill="#06668f" stroke="#06668f" stroke-width="0.35" font-family="Liberation Sans" font-size="15.5px">
<text transform="translate(613,186) scale(1,1.12)">+146</text>
<text transform="translate(613,205.5) scale(1,1.12)">V</text>
<text transform="translate(785.3,193.2) scale(1,1.12)">100 K</text>
<text transform="translate(883.7,139.5) scale(1,1.12)">+273</text>
<text transform="translate(883.7,161) scale(1,1.12)">V</text>
<text transform="translate(952.1,193.2) scale(1,1.12)">81 K</text>
<text transform="translate(908.7,217.8) scale(1,1.12)">12 µF/350V</text>
<text transform="translate(932.8,237.4) scale(1,1.12)">MKP</text>
<text transform="translate(439,337) scale(1,1.12)">1</text>
<text transform="translate(402,378) scale(1,1.12)">2</text>
<text transform="translate(506.3,378) scale(1,1.12)">2</text>
<text transform="translate(416.6,448) scale(1,1.12)">3</text>
<text transform="translate(481,451.2) scale(1,1.12)">1)VK/VG1</text>
<text transform="translate(671.5,336.2) scale(1,1.12)">6</text>
<text transform="translate(606.7,376.9) scale(1,1.12)">7</text>
<text transform="translate(606.7,415.3) scale(1,1.12)">8</text>
<text transform="translate(681.4,451) scale(1,1.12)">3) VA/VK</text>
<text transform="translate(256.5,401) scale(1,1.12)">I</text>
<text transform="translate(256.5,420.7) scale(1,1.12)">N</text>
<text transform="translate(274.7,468) scale(1,1.12)">270 K</text>
<text transform="translate(391.2,539.3) scale(1,1.12)">10 µF</text>
<text transform="translate(462.5,539) scale(1,1.12)">12K</text>
<text transform="translate(530.3,607.8) scale(1,1.12)">33 µF</text>
<text transform="translate(535.5,626.9) scale(1,1.12)">10V</text>
<text transform="translate(674.6,554.6) scale(1,1.12)">2,2 µF</text>
<text transform="translate(679.8,574) scale(1,1.12)">MKC</text>
<text transform="translate(453.8,676.3) scale(1,1.12)">2) VK/masse</text>
<text transform="translate(857.5,359.5) scale(1,1.12)">0,5 µF/630V</text>
<text transform="translate(884.9,379.2) scale(1,1.12)">MKP</text>
<text transform="translate(945.1,420.9) scale(1,1.12)">1 K</text>
<text transform="translate(988.6,354.9) scale(1,1.12)">1</text>
<text transform="translate(988.6,416.2) scale(1,1.12)">5</text>
<text transform="translate(933.4,480) scale(1,1.12)">4) VK/VG1</text>
<text transform="translate(848,537.3) scale(1,1.12)">470K</text>
<text transform="translate(956.6,624.4) scale(1,1.12)">2,2 µF</text>
<text transform="translate(961.4,643.8) scale(1,1.12)">MKC</text>
<text transform="translate(958.3,696.1) scale(1,1.12)">5) VK/masse</text>
<text transform="translate(1294.2,225.6) scale(1,1.12)">K 120mA</text>
<text transform="translate(1296.6,245.4) scale(1,1.12)">30W</text>
<text transform="translate(1258,437.4) scale(1,1.12)">HT *380V</text>
<text transform="translate(537.6,358.2) scale(1,1.12)" textLength="45.39999999999998" lengthAdjust="spacingAndGlyphs">12AX7</text>
<rect x="537.6" y="360.4" width="45.39999999999998" height="1.3" stroke="none"/>
<text transform="translate(995,315.2) scale(1,1.12)" textLength="32.799999999999955" lengthAdjust="spacingAndGlyphs">EL34</text>
<rect x="995" y="317.9" width="32.799999999999955" height="1.3" stroke="none"/>
</g>
<g fill="#06668f">
<circle cx="733.5" cy="164.5" r="5.5"/>
<circle cx="878.4" cy="164.5" r="5.5"/>
<circle cx="560.5" cy="324.5" r="5.5"/>
<circle cx="332.9" cy="391.2" r="5.5"/>
<circle cx="436.5" cy="474" r="5.5"/>
<circle cx="506" cy="474" r="5.5"/>
<circle cx="573.1" cy="474" r="5.5"/>
<circle cx="643.3" cy="474" r="5.5"/>
<circle cx="898.8" cy="391.2" r="5.5"/>
<circle cx="1020" cy="489.5" r="5.5"/>
</g>
<rect x="415.5" y="339.5" width="84.0" height="104.0" fill="none" stroke="#3cc83c" stroke-width="1" stroke-dasharray="5,4"/>
<path d="M457.5,314.9 V339.5" stroke="#1ec81e" stroke-width="1.2"/>
<circle cx="457.5" cy="314.9" r="3.4" fill="#44c444" stroke="#156015" stroke-width="1"/>
<rect x="412.1" y="336.1" width="6.8" height="6.8" fill="#44c444" stroke="#156015" stroke-width="1"/>
<rect x="454.1" y="336.1" width="6.8" height="6.8" fill="#44c444" stroke="#156015" stroke-width="1"/>
<rect x="496.1" y="336.1" width="6.8" height="6.8" fill="#44c444" stroke="#156015" stroke-width="1"/>
<rect x="412.1" y="388.1" width="6.8" height="6.8" fill="#44c444" stroke="#156015" stroke-width="1"/>
<rect x="496.1" y="388.1" width="6.8" height="6.8" fill="#44c444" stroke="#156015" stroke-width="1"/>
<rect x="412.1" y="440.1" width="6.8" height="6.8" fill="#44c444" stroke="#156015" stroke-width="1"/>
<rect x="454.1" y="440.1" width="6.8" height="6.8" fill="#44c444" stroke="#156015" stroke-width="1"/>
<rect x="496.1" y="440.1" width="6.8" height="6.8" fill="#44c444" stroke="#156015" stroke-width="1"/>
<rect x="621.5" y="339.5" width="85.0" height="104.0" fill="none" stroke="#3535c8" stroke-width="1" stroke-dasharray="5,4"/>
<path d="M664.5,315 V339.5" stroke="#6ab0e8" stroke-width="1.2"/>
<circle cx="664.5" cy="315" r="3.4" fill="#45b3c9" stroke="#1d5670" stroke-width="1"/>
<rect x="618.1" y="336.1" width="6.8" height="6.8" fill="#45b3c9" stroke="#1d5670" stroke-width="1"/>
<rect x="661.1" y="336.1" width="6.8" height="6.8" fill="#45b3c9" stroke="#1d5670" stroke-width="1"/>
<rect x="703.1" y="336.1" width="6.8" height="6.8" fill="#45b3c9" stroke="#1d5670" stroke-width="1"/>
<rect x="618.1" y="388.1" width="6.8" height="6.8" fill="#45b3c9" stroke="#1d5670" stroke-width="1"/>
<rect x="703.1" y="388.1" width="6.8" height="6.8" fill="#45b3c9" stroke="#1d5670" stroke-width="1"/>
<rect x="618.1" y="440.1" width="6.8" height="6.8" fill="#45b3c9" stroke="#1d5670" stroke-width="1"/>
<rect x="661.1" y="440.1" width="6.8" height="6.8" fill="#45b3c9" stroke="#1d5670" stroke-width="1"/>
<rect x="703.1" y="440.1" width="6.8" height="6.8" fill="#45b3c9" stroke="#1d5670" stroke-width="1"/>
<rect x="1003.5" y="325.5" width="81.0" height="104.0" fill="none" stroke="#3535c8" stroke-width="1" stroke-dasharray="5,4"/>
<path d="M1044.5,301 V325.5" stroke="#6ab0e8" stroke-width="1.2"/>
<circle cx="1044.5" cy="301" r="3.4" fill="#45b3c9" stroke="#1d5670" stroke-width="1"/>
<rect x="1000.1" y="322.1" width="6.8" height="6.8" fill="#45b3c9" stroke="#1d5670" stroke-width="1"/>
<rect x="1041.1" y="322.1" width="6.8" height="6.8" fill="#45b3c9" stroke="#1d5670" stroke-width="1"/>
<rect x="1081.1" y="322.1" width="6.8" height="6.8" fill="#45b3c9" stroke="#1d5670" stroke-width="1"/>
<rect x="1000.1" y="374.1" width="6.8" height="6.8" fill="#45b3c9" stroke="#1d5670" stroke-width="1"/>
<rect x="1081.1" y="374.1" width="6.8" height="6.8" fill="#45b3c9" stroke="#1d5670" stroke-width="1"/>
<rect x="1000.1" y="426.1" width="6.8" height="6.8" fill="#45b3c9" stroke="#1d5670" stroke-width="1"/>
<rect x="1041.1" y="426.1" width="6.8" height="6.8" fill="#45b3c9" stroke="#1d5670" stroke-width="1"/>
<rect x="1081.1" y="426.1" width="6.8" height="6.8" fill="#45b3c9" stroke="#1d5670" stroke-width="1"/>
</g>
</svg>
<div id="vscroll" class="a"></div>
<div class="a" style="left:228px;top:788px;width:1210px;height:15px;background:linear-gradient(#f2f2f2,#fbfbfb)"></div>
<div class="a" style="left:0;top:803px;width:1438px;height:17px;background:#ececec;border-top:1px solid #8e8e8e"></div>
<div class="a" style="left:228px;top:788px;width:16.5px;height:15px;background:linear-gradient(#f6f6f6,#dcdcdc);border-right:1px solid #aaa"></div>
<div class="a" style="left:244.5px;top:788px;width:46.5px;height:15px;background:linear-gradient(#f8f8f8,#e6e6e6);border-left:2px solid #333;border-right:1px solid #999"></div>
<div class="a" style="left:292px;top:788px;width:94px;height:15px;background:linear-gradient(#ffffff,#eeeeee);border-right:1px solid #aaa"></div>
<div class="a" style="left:296px;top:789px;font-size:11px;line-height:13px;color:#111;white-space:nowrap">Custom 103%</div>
<div class="a" style="left:387.5px;top:788px;width:44px;height:15px;background:linear-gradient(#c4c4c4,#969696 60%,#a8a8a8);border:1px solid #8a8a8a"></div>
<div class="a" style="left:451.9px;top:792px;width:940px;height:8px;border-radius:4px;background:#c3c3c3"></div>
<div class="a" style="left:1410px;top:789px;width:14.5px;height:12.5px;background:#c0c8d4;border:1px solid #8a8a8a"></div>
<div class="a" style="left:1426.5px;top:789px;width:12px;height:12.5px;background:#d8e0ec;border:1px solid #8a8a8a"></div>
<svg class="a" style="left:0;top:0" width="1438" height="820"><rect x="234" y="792.3" width="1.4" height="6.7" fill="#8a8a8a"/><rect x="236.8" y="792.3" width="1.4" height="6.7" fill="#8a8a8a"/><path d="M259.9,792.3 L253.2,795.8 L259.9,799.3 Z M278.3,792.3 L284.9,795.8 L278.3,799.3 Z" fill="#c4c4c4"/><rect x="267.5" y="791.5" width="1" height="8" fill="#cfcfcf"/><path d="M375.8,795 L378.4,791.3 L381,795 Z M375.8,797.5 L378.4,801.2 L381,797.5 Z" fill="#111"/><rect x="394.6" y="791.5" width="6.7" height="8.9" fill="#fff" stroke="#777" stroke-width="0.5"/><rect x="405.1" y="791.5" width="6.7" height="8.9" fill="#fff" stroke="#777" stroke-width="0.5"/><rect x="416.8" y="791.5" width="6.7" height="8.9" fill="#fff" stroke="#777" stroke-width="0.5"/><rect x="1414" y="792" width="6" height="6" fill="#e8f0fa" stroke="#3a6ad0" stroke-width="1"/><path d="M1417,789.8 L1415.5,791.3 H1418.5 Z M1417,800.3 L1415.5,798.8 H1418.5 Z M1411.8,795 L1413.3,793.5 V796.5 Z M1422.3,795 L1420.8,793.5 V796.5 Z" fill="#2a5ad0"/><rect x="1430" y="791" width="6" height="9" fill="#fff" stroke="#3a5ab0" stroke-width="1"/></svg>
<div class="a" style="left:8.5px;top:804px;font-size:11px;line-height:14px;color:#111">Ready</div>
<div class="a" style="left:214.5px;top:804px;font-size:12px;line-height:14px;color:#111;white-space:pre">W: 0.80,  H: 1.00,  Angle: 0.00 rad</div>
<div class="a" style="left:542px;top:804px;font-size:12px;line-height:14px;color:#111;white-space:pre">M: [ 7.64, 2.49 ]</div>
<div class="a" style="left:797px;top:804px;font-size:12px;line-height:14px;color:#111;white-space:pre">ID: 438499</div>
<div class="a" style="left:1053.5px;top:172px;width:241px;height:231px;background:#ececec;box-shadow:0 3px 8px rgba(0,0,0,.35);border:1px solid #a2a2a2;border-top:none"></div>
<div class="a" style="left:1054px;top:173px;width:240px;height:16px;background:linear-gradient(#f0f0f0,#d6d6d6);border-top:1px solid #fafafa"></div>
<svg class="a" style="left:1082px;top:178px" width="10" height="8"><path d="M0.3,0.3 H9 L4.65,7.5 Z" fill="#777"/></svg>
<div class="a" style="left:1092px;top:174px;font-size:12.5px;line-height:15px;color:#000;white-space:nowrap">Presentation Mode</div>
<div class="a" style="left:1054px;top:188px;width:240px;height:1px;background:#c8c8c8"></div>
<div class="a" style="left:1062px;top:210px;font-weight:bold;font-size:12px;line-height:14px;color:#111;white-space:nowrap">Monitor</div>
<div class="a" style="left:1062px;top:238px;font-weight:bold;font-size:12px;line-height:14px;color:#111;white-space:nowrap">Options</div>
<div class="a" style="left:1062px;top:306px;font-weight:bold;font-size:12px;line-height:14px;color:#111;white-space:nowrap">Controls</div>
<div class="a" style="left:1115px;top:208px;width:166px;height:18px;border-radius:4px;border:1px solid #8c8c8c;background:linear-gradient(#ffffff,#f4f4f4 50%,#e8e8e8);box-shadow:0 1px 1px rgba(0,0,0,.15)"></div>
<div class="a" style="left:1123px;top:210px;font-size:12px;line-height:14px;color:#000">iMac</div>
<svg class="a" style="left:1267px;top:210px" width="8" height="14"><path d="M1,5.5 L3.5,2 L6,5.5 Z M1,8.5 L3.5,12 L6,8.5 Z" fill="#333"/></svg>
<div class="a" style="left:1119px;top:236px;width:22px;height:21px;border:1px solid #8a8a8a;background:linear-gradient(#f8f8f8,#dedede)"></div>
<svg class="a" style="left:1121px;top:239px" width="18" height="16"><rect x="2.5" y="2" width="13" height="9" fill="#2a7ae0" stroke="#444" stroke-width="1"/><rect x="4" y="3.5" width="10" height="6" fill="#4aa0f0"/><path d="M7,12.5 H11 M9,11 V12.5" stroke="#555" stroke-width="1.3"/></svg>
<div class="a" style="left:1147px;top:241px;font-size:11.4px;line-height:13px;color:#000;white-space:nowrap">Set Page Size as Screen</div>
<div class="a" style="left:1123px;top:263px;width:12px;height:12px;border:1px solid #8a8a8a;border-radius:2px;background:linear-gradient(#fdfdfd,#e4e4e4)"></div>
<div class="a" style="left:1140px;top:263px;font-size:11.4px;line-height:13px;color:#000;white-space:nowrap">By Time:</div>
<div class="a" style="left:1191px;top:258px;width:90px;height:19px;border:1px solid #b8b8b8;background:#fafafa"></div>
<div class="a" style="left:1196px;top:262px;font-size:11.4px;line-height:13px;color:#000;white-space:nowrap;color:#8a8a8a">20.0 sec</div>
<div class="a" style="left:1123px;top:284px;width:12px;height:12px;border:1px solid #8a8a8a;border-radius:2px;background:linear-gradient(#fdfdfd,#e4e4e4)"></div>
<div class="a" style="left:1140px;top:284px;font-size:11.4px;line-height:13px;color:#000;white-space:nowrap">Loop Continuously</div>
<div class="a" style="left:1119px;top:306px;width:162px;height:29px;border-radius:5px;border:1px solid #868686;background:linear-gradient(#ffffff,#f2f2f2 50%,#e2e2e2);box-shadow:0 1px 2px rgba(0,0,0,.3)"></div>
<svg class="a" style="left:1126px;top:313px" width="14" height="16"><path d="M0.5,0.5 L12,7.5 L0.5,14.5 Z" fill="#111"/></svg>
<div class="a" style="left:1166px;top:313px;font-size:11.4px;line-height:13px;color:#000;white-space:nowrap">Start Presentation</div>
<div class="a" style="left:1119.5px;top:342.5px;width:27px;height:26px;border-radius:5px;border:1px solid #c6c6c6;background:linear-gradient(#f4f4f4,#e6e6e6)"></div>
<div class="a" style="left:1166.5px;top:342.5px;width:27px;height:26px;border-radius:5px;border:1px solid #c6c6c6;background:linear-gradient(#f4f4f4,#e6e6e6)"></div>
<div class="a" style="left:1210.5px;top:342.5px;width:27px;height:26px;border-radius:5px;border:1px solid #c6c6c6;background:linear-gradient(#f4f4f4,#e6e6e6)"></div>
<div class="a" style="left:1253.7px;top:342.5px;width:27px;height:26px;border-radius:5px;border:1px solid #c6c6c6;background:linear-gradient(#f4f4f4,#e6e6e6)"></div>
<svg class="a" style="left:1119px;top:342px" width="170" height="28"><g fill="#d2d2d2"><rect x="8.5" y="7" width="3.5" height="13"/><rect x="15" y="7" width="3.5" height="13"/><rect x="53" y="7" width="3" height="13"/><path d="M56,13.5 L68,7 V20 Z"/><rect x="113" y="7" width="3" height="13"/><path d="M113,13.5 L101,7 V20 Z"/><rect x="143" y="8" width="12" height="11"/></g></svg>
<div class="a" style="left:1054px;top:386px;width:240px;height:17px;background:linear-gradient(#e8e8e8,#d4d4d4);border-top:1px solid #c0c0c0"></div>
<div class="a" style="left:1094px;top:388px;font-size:12.5px;line-height:14px;color:#a0a0a0;white-space:nowrap">Dynamic Help</div>
<div class="a" style="left:1054px;top:28px;width:240px;height:144px;background:#e6e6e6;box-shadow:0 2px 6px rgba(0,0,0,.45)"></div>
<div class="a" style="left:1054px;top:28px;width:240px;height:16px;background:linear-gradient(#f0f0f0,#d6d6d6);border-top:1px solid #fafafa"></div>
<div class="a" style="left:1060.2px;top:30.4px;width:10.8px;height:10.8px;border-radius:50%;background:linear-gradient(#fff,#e4e4e4);border:1px solid #b4b4b4"></div>
<svg class="a" style="left:1082px;top:33px" width="10" height="8"><path d="M0.3,0.3 H9 L4.65,7.5 Z" fill="#777"/></svg>
<div class="a" style="left:1092px;top:29px;font-size:12.5px;line-height:15px;color:#000;white-space:nowrap">Behaviour</div>
<div class="a" style="left:1054px;top:44px;width:240px;height:31px;background:linear-gradient(#ebebeb,#e3e3e3)"></div>
<div class="a" style="left:1054px;top:75px;width:240px;height:1px;background:#a6a6a6"></div>
<div class="a" style="left:1054px;top:76px;width:240px;height:16px;background:linear-gradient(#f0f0f0,#d6d6d6);border-top:1px solid #fafafa"></div>
<svg class="a" style="left:1082px;top:81px" width="10" height="8"><path d="M0.3,0.3 H9 L4.65,7.5 Z" fill="#777"/></svg>
<div class="a" style="left:1092px;top:77px;font-size:12.5px;line-height:15px;color:#000;white-space:nowrap">Information</div>
<div class="a" style="left:1054px;top:92px;width:240px;height:31px;background:linear-gradient(#ebebeb,#e3e3e3)"></div>
<div class="a" style="left:1054px;top:123px;width:240px;height:1px;background:#a6a6a6"></div>
<div class="a" style="left:1054px;top:124px;width:240px;height:16px;background:linear-gradient(#f0f0f0,#d6d6d6);border-top:1px solid #fafafa"></div>
<svg class="a" style="left:1082px;top:129px" width="10" height="8"><path d="M0.3,0.3 H9 L4.65,7.5 Z" fill="#777"/></svg>
<div class="a" style="left:1092px;top:125px;font-size:12.5px;line-height:15px;color:#000;white-space:nowrap">Line</div>
<div class="a" style="left:1054px;top:140px;width:240px;height:32px;background:linear-gradient(#ececec,#e2e2e2)"></div>
<svg class="a" style="left:0;top:0" width="1300" height="180"><rect x="1065.3" y="50.3" width="16.3" height="16.2" fill="none" stroke="#2a6ab0" stroke-width="1" stroke-dasharray="2,1.3"/><rect x="1071.7" y="48.5" width="3.6" height="3.6" fill="#1ec01e" stroke="#0a700a" stroke-width="0.5"/><rect x="1071.7" y="64.7" width="3.6" height="3.6" fill="#1ec01e" stroke="#0a700a" stroke-width="0.5"/><rect x="1063.5" y="56.6" width="3.6" height="3.6" fill="#1ec01e" stroke="#0a700a" stroke-width="0.5"/><rect x="1079.8" y="56.6" width="3.6" height="3.6" fill="#1ec01e" stroke="#0a700a" stroke-width="0.5"/><path d="M1101.5,57 V54.5 A3.7,3.7 0 0 1 1108.9,54.5 V57" fill="none" stroke="#8a8a8a" stroke-width="1.8"/><rect x="1099" y="57" width="12.3" height="10.5" rx="2" fill="#c4c4c4" stroke="#7a7a7a" stroke-width="1"/><circle cx="1105.2" cy="61" r="1.2" fill="#222"/><path d="M1105.2,61 V64" stroke="#222" stroke-width="1"/><rect x="1130" y="55" width="11" height="11" fill="#7a96d4" stroke="#2a46a0" stroke-width="1"/><path d="M1130.5,49.5 H1141 M1145.5,55 V66" stroke="#a8b8e0" stroke-width="0.8"/><rect x="1128.2" y="53.2" width="3.6" height="3.6" fill="#1ec01e" stroke="#0a700a" stroke-width="0.5"/><rect x="1139.2" y="53.2" width="3.6" height="3.6" fill="#1ec01e" stroke="#0a700a" stroke-width="0.5"/><rect x="1128.2" y="64.2" width="3.6" height="3.6" fill="#1ec01e" stroke="#0a700a" stroke-width="0.5"/><rect x="1139.2" y="64.2" width="3.6" height="3.6" fill="#1ec01e" stroke="#0a700a" stroke-width="0.5"/><path d="M1163,60 Q1164,52 1172,51.5" fill="none" stroke="#3a9ae0" stroke-width="3.2"/><path d="M1171,48.5 L1175.5,51.5 L1171,54.5 Z" fill="#3a9ae0"/><rect x="1175" y="48.5" width="4.8" height="4.8" fill="#f0c020" stroke="#b08010" stroke-width="0.7"/><rect x="1159.5" y="59.5" width="9.5" height="8.5" rx="1.5" fill="#7a96d4" stroke="#2a46a0" stroke-width="1"/><rect x="1066.3" y="98" width="14.8" height="15" fill="#eef4fc" stroke="#2a46a0" stroke-width="1.1"/><path d="M1068.7,102.5 H1078.7 M1068.7,105.5 H1078.7 M1068.7,108.5 H1078.7" stroke="#a8a8d8" stroke-width="0.8"/><rect x="1096.3" y="97.3" width="15.8" height="12.8" fill="#f4f4f4" stroke="#555" stroke-width="1.1"/><path d="M1098.5,101 H1109.5 M1098.5,104 H1109.5 M1098.5,107 H1105" stroke="#b0b0b0" stroke-width="0.8"/><path d="M1106,103 V115.5 L1108.5,113 L1110.5,116.5 L1112,115.8 L1110,112.3 L1113.5,112 Z" fill="#e8f0ff" stroke="#1c2a8c" stroke-width="1"/><rect x="1133.5" y="102" width="13" height="13.5" fill="#f0f0f0" stroke="#a8b8d8" stroke-width="0.9"/><rect x="1130.8" y="99.5" width="13" height="13.5" fill="#f4f6fa" stroke="#7a8ec8" stroke-width="0.9"/><rect x="1128.3" y="97.3" width="13" height="13" fill="#eaf2fc" stroke="#2a46a0" stroke-width="1.1"/><path d="M1063.5,159.4 H1083.5 M1063.5,162.5 H1083.5" stroke="#2a7ae8" stroke-width="1.3"/><path d="M1068,157 L1074,151" stroke="#3a6ad8" stroke-width="3"/><path d="M1073.5,151.5 L1082,146" stroke="#c87840" stroke-width="1.8"/><ellipse cx="1106" cy="160" rx="8" ry="2.8" fill="#2a8ae8" stroke="#1a60b8" stroke-width="0.8"/><path d="M1106,160 V149 Q1106,146.5 1103.5,146.8" stroke="#2a8ae8" stroke-width="2.2" fill="none"/><path d="M1097,149 L1101,144 L1105,147 L1101,152 Z" fill="#9a9a9a" stroke="#555" stroke-width="0.8"/><rect x="1129.5" y="147.2" width="12.5" height="11.5" rx="1" fill="url(#gr1)" stroke="#6a6a6a" stroke-width="1"/><defs><linearGradient id="gr1" x1="0" y1="0" x2="0" y2="1"><stop offset="0" stop-color="#f4f4f4"/><stop offset="1" stop-color="#a8a8a8"/></linearGradient></defs><path d="M1130,159.5 H1143 V148" stroke="#8ab8f8" stroke-width="1.4" fill="none" opacity=".7"/><text x="1161.5" y="162" font-family="Liberation Serif" font-weight="bold" font-size="21" fill="#2a58a8">A</text></svg>
<div class="a" style="left:1021.5px;top:372px;width:211.8px;height:221.3px;border-radius:5px;background:rgba(255,255,255,.975);box-shadow:0 6px 14px rgba(0,0,0,.38),0 0 0 .5px rgba(0,0,0,.18)"></div>
<div class="a" style="left:1042.5px;top:376px;font-size:15px;line-height:18px;color:#000;white-space:nowrap">Cut</div>
<div class="a" style="left:1042.5px;top:395px;font-size:15px;line-height:18px;color:#000;white-space:nowrap">Copy</div>
<div class="a" style="left:1042.5px;top:414px;font-size:15px;line-height:18px;color:#a8a8a8;white-space:nowrap">Paste</div>
<div class="a" style="left:1042.5px;top:433px;font-size:15px;line-height:18px;color:#000;white-space:nowrap">Delete</div>
<div class="a" style="left:1021.5px;top:456.5px;width:211.8px;height:1px;background:#e2e2e2"></div>
<div class="a" style="left:1042.5px;top:464px;font-size:15px;line-height:18px;color:#000;white-space:nowrap">Fit To Text</div>
<div class="a" style="left:1021.5px;top:482.5px;width:211.8px;height:19px;background:linear-gradient(#6b86f5,#3b5ae9);border-top:1px solid #5a74ee;border-bottom:1px solid #2f4ee2"></div>
<div class="a" style="left:1042.5px;top:483px;font-size:15px;line-height:18px;color:#fff;white-space:nowrap">Object</div>
<div class="a" style="left:1042.5px;top:502px;font-size:15px;line-height:18px;color:#000;white-space:nowrap">Hyperlink</div>
<div class="a" style="left:1042.5px;top:521px;font-size:15px;line-height:18px;color:#000;white-space:nowrap">Lock</div>
<div class="a" style="left:1021.5px;top:544.5px;width:211.8px;height:1px;background:#e2e2e2"></div>
<div class="a" style="left:1042.5px;top:552px;font-size:15px;line-height:18px;color:#000;white-space:nowrap">Add Custom Properties</div>
<div class="a" style="left:1042.5px;top:571px;font-size:15px;line-height:18px;color:#000;white-space:nowrap">Power Edit</div>
<div class="a" style="left:1206.3px;top:573px;font-size:12px;font-weight:bold;line-height:14px;color:#000">F6</div>
<svg class="a" style="left:0;top:0" width="1438" height="820"><path d="M1214.5,487 L1222.5,491.5 L1214.5,496 Z" fill="#fff"/><path d="M1214.5,506 L1222.5,510.5 L1214.5,515 Z" fill="#222"/><path d="M1214.5,525 L1222.5,529.5 L1214.5,534 Z" fill="#222"/></svg>
<div class="a" style="left:1232.6px;top:478.5px;width:199.2px;height:203.3px;border-radius:5px;background:rgba(255,255,255,.975);box-shadow:0 6px 14px rgba(0,0,0,.38),0 0 0 .5px rgba(0,0,0,.18)"></div>
<div class="a" style="left:1253.6px;top:482.5px;font-size:15px;line-height:18px;color:#000;white-space:nowrap">Send To Back</div>
<div class="a" style="left:1408.3px;top:482.5px;font-size:15px;line-height:18px;color:#000">B</div>
<div class="a" style="left:1253.6px;top:501.5px;font-size:15px;line-height:18px;color:#000;white-space:nowrap">Bring To Front</div>
<div class="a" style="left:1409.3px;top:501.5px;font-size:15px;line-height:18px;color:#000">F</div>
<div class="a" style="left:1232.6px;top:525.0px;width:199.2px;height:1px;background:#e2e2e2"></div>
<div class="a" style="left:1253.6px;top:532.5px;font-size:15px;line-height:18px;color:#000;white-space:nowrap">Rotate Left (90º)</div>
<div class="a" style="left:1409.8px;top:532.5px;font-size:15px;line-height:18px;color:#000">L</div>
<div class="a" style="left:1232.6px;top:551.0px;width:199.2px;height:19px;background:linear-gradient(#6b86f5,#3b5ae9);border-top:1px solid #5a74ee;border-bottom:1px solid #2f4ee2"></div>
<div class="a" style="left:1253.6px;top:551.5px;font-size:15px;line-height:18px;color:#fff;white-space:nowrap">Rotate Right (90º)</div>
<div class="a" style="left:1408.3px;top:551.5px;font-size:15px;line-height:18px;color:#fff">R</div>
<div class="a" style="left:1253.6px;top:570.5px;font-size:15px;line-height:18px;color:#000;white-space:nowrap">Flip Horizontal</div>
<div class="a" style="left:1253.6px;top:589.5px;font-size:15px;line-height:18px;color:#000;white-space:nowrap">Flip Vertical</div>
<div class="a" style="left:1410.8px;top:589.5px;font-size:15px;line-height:18px;color:#000">J</div>
<div class="a" style="left:1232.6px;top:613.0px;width:199.2px;height:1px;background:#e2e2e2"></div>
<div class="a" style="left:1253.6px;top:620.5px;font-size:15px;line-height:18px;color:#000;white-space:nowrap">Edit Text</div>
<div class="a" style="left:1404.8px;top:622.5px;font-size:12px;font-weight:bold;line-height:14px;color:#000">F2</div>
<div class="a" style="left:1253.6px;top:639.5px;font-size:15px;line-height:18px;color:#000;white-space:nowrap">Group</div>
<div class="a" style="left:1407.3px;top:639.5px;font-size:15px;line-height:18px;color:#000">G</div>
<div class="a" style="left:1253.6px;top:658.5px;font-size:15px;line-height:18px;color:#000;white-space:nowrap">Ungroup</div>
<svg class="a" style="left:0;top:0" width="1438" height="820"><g transform="translate(1395.3,486.0)" fill="none" stroke="#000" stroke-width="1.1"><path d="M3.5,3.5 H7.5 V7.5 H3.5 Z"/><circle cx="2" cy="2" r="1.6"/><circle cx="9" cy="2" r="1.6"/><circle cx="2" cy="9" r="1.6"/><circle cx="9" cy="9" r="1.6"/></g><g transform="translate(1381.3,486.0)" fill="none" stroke="#000" stroke-width="1.2"><path d="M0,1 H3.5 L8.5,10 H12 M7.5,1 H12"/></g><g transform="translate(1396.3,505.0)" fill="none" stroke="#000" stroke-width="1.1"><path d="M3.5,3.5 H7.5 V7.5 H3.5 Z"/><circle cx="2" cy="2" r="1.6"/><circle cx="9" cy="2" r="1.6"/><circle cx="2" cy="9" r="1.6"/><circle cx="9" cy="9" r="1.6"/></g><g transform="translate(1382.3,505.0)" fill="none" stroke="#000" stroke-width="1.2"><path d="M0,1 H3.5 L8.5,10 H12 M7.5,1 H12"/></g><g transform="translate(1396.8,536.0)" fill="none" stroke="#000" stroke-width="1.1"><path d="M3.5,3.5 H7.5 V7.5 H3.5 Z"/><circle cx="2" cy="2" r="1.6"/><circle cx="9" cy="2" r="1.6"/><circle cx="2" cy="9" r="1.6"/><circle cx="9" cy="9" r="1.6"/></g><g transform="translate(1395.3,555.0)" fill="none" stroke="#fff" stroke-width="1.1"><path d="M3.5,3.5 H7.5 V7.5 H3.5 Z"/><circle cx="2" cy="2" r="1.6"/><circle cx="9" cy="2" r="1.6"/><circle cx="2" cy="9" r="1.6"/><circle cx="9" cy="9" r="1.6"/></g><g transform="translate(1397.8,593.0)" fill="none" stroke="#000" stroke-width="1.1"><path d="M3.5,3.5 H7.5 V7.5 H3.5 Z"/><circle cx="2" cy="2" r="1.6"/><circle cx="9" cy="2" r="1.6"/><circle cx="2" cy="9" r="1.6"/><circle cx="9" cy="9" r="1.6"/></g><g transform="translate(1383.8,593.0)" fill="none" stroke="#000" stroke-width="1.2"><path d="M0,1 H3.5 L8.5,10 H12 M7.5,1 H12"/></g><g transform="translate(1394.3,643.0)" fill="none" stroke="#000" stroke-width="1.1"><path d="M3.5,3.5 H7.5 V7.5 H3.5 Z"/><circle cx="2" cy="2" r="1.6"/><circle cx="9" cy="2" r="1.6"/><circle cx="2" cy="9" r="1.6"/><circle cx="9" cy="9" r="1.6"/></g></svg>
</body></html>
